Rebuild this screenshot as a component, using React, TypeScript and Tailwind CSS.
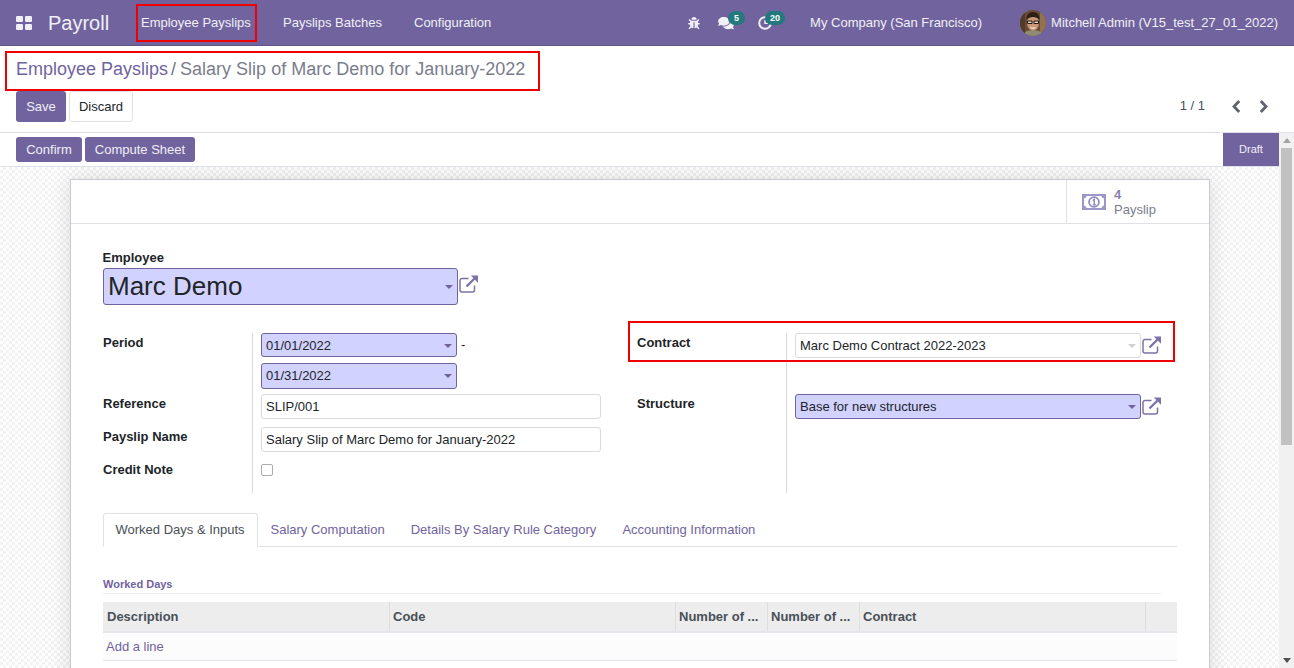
import { FaBug, FaComments } from "react-icons/fa";
import type { ReactNode } from "react";

// fa-external-link, the package only has the newer shapes
function OpenLink({ big }: { big?: boolean }) {
  return (
    <svg viewBox="0 0 20 20" className={big ? "w-[20px] h-[20px] ml-px mt-[6px] shrink-0" : "w-[20px] h-[20px] ml-px mt-[2px] shrink-0"} fill="none" stroke="#7d71a8">
      <path d="M15.500 11.500v4.500a2 2 0 0 1-2 2H3a2 2 0 0 1-2-2V6.500a2 2 0 0 1 2-2h6.500" strokeWidth="1.500" />
      <path d="M7.500 12.500 17 3" strokeWidth="2.300" />
      <path d="M11.800 1.500H19v7.200z" fill="#7d71a8" stroke="none" />
    </svg>
  );
}

function AppsIcon() {
  return (
    <svg viewBox="0 0 16 14" className="w-[16px] h-[14px]" fill="#f2f0f7">
      <rect x="0" y="0" width="7" height="6" rx="1.300" />
      <rect x="9" y="0" width="7" height="6" rx="1.300" />
      <rect x="0" y="8" width="7" height="6" rx="1.300" />
      <rect x="9" y="8" width="7" height="6" rx="1.300" />
    </svg>
  );
}

function ClockIcon() {
  return (
    <svg viewBox="0 0 14 14" className="w-[14px] h-[14px]" fill="none" stroke="#f2f0f7" strokeWidth="2">
      <circle cx="7" cy="7" r="5.800" />
      <path d="M7 4v3.400h3" strokeWidth="1.400" />
    </svg>
  );
}

function MoneyIcon() {
  return (
    <svg viewBox="0 0 24 16" className="w-[24px] h-[16px]">
      <path d="M0 0h24v16H0z" fill="#9b97c9" />
      <path d="M4.500 2h15q0 2 2.500 2.500v7q-2.500.5-2.500 2.500h-15q0-2-2.500-2.500v-7q2.500-.5 2.500-2.500z" fill="#fff" />
      <circle cx="12" cy="8" r="5.800" fill="#8f8bc0" />
      <circle cx="12" cy="8" r="4" fill="#fff" />
      <path d="M10.800 6.300 12.300 5.300V10.800M10.800 10.800h3" fill="none" stroke="#8f8bc0" strokeWidth="1.400" />
    </svg>
  );
}

function Avatar() {
  return (
    <svg viewBox="0 0 26 26" className="w-[26px] h-[26px] rounded-full shrink-0">
      <rect width="26" height="26" fill="#6b4c33" />
      <rect x="20" width="6" height="26" fill="#94714f" />
      <rect width="5" height="26" fill="#4f3b29" />
      <path d="M3 26q1-6 10-6t10 6z" fill="#8f8a76" />
      <ellipse cx="13" cy="12.500" rx="6" ry="8" fill="#c9977a" />
      <path d="M6.500 10q0-8 6.500-8t6.500 8q-2.500-3-6.500-3t-6.500 3z" fill="#2b2019" />
      <path d="M7.500 11h4.500v2.500H7.500zM14 11h4.500v2.500H14z" fill="#e8d5c4" stroke="#241a14" strokeWidth="1" />
      <path d="M10.500 17.500q2.500 1.200 5 0" stroke="#f7efe8" strokeWidth="1.200" fill="none" />
    </svg>
  );
}

function Chevron({ path, className }: { path: string; className: string }) {
  return (
    <svg viewBox="0 0 9 13" className={`w-[9px] h-[13px] ${className}`} fill="none" stroke="#5f636f" strokeWidth="2.800">
      <path d={path} />
    </svg>
  );
}

function Badge({ children, wide }: { children: ReactNode; wide?: boolean }) {
  return (
    <span className={`absolute -top-[5px] h-[14px] rounded-full bg-[#23797d] text-white text-[9px] leading-[14px] font-bold text-center ${wide ? "left-[7px] w-[20px]" : "left-[10px] w-[17px]"}`}>
      {children}
    </span>
  );
}

function Caret({ color }: { color: string }) {
  return <span className={`w-0 h-0 border-x-[4px] border-x-transparent border-t-[4px] ${color}`} />;
}

function FieldRow({ label, height, children }: { label: string; height: string; children: ReactNode }) {
  return (
    <div className={`flex ${height}`}>
      <div className="w-[149px] shrink-0 font-bold pt-[3px] leading-[14px]">{label}</div>
      <div className="flex-1 border-l border-[#d8dadd] pl-[8px]">{children}</div>
    </div>
  );
}

function RequiredSelect({ value, className }: { value: string; className: string }) {
  return (
    <div className={`flex items-center justify-between bg-[#d2d2ff] border border-[#71639e] rounded-[3px] pl-[4px] pr-[4px] ${className}`}>
      <span>{value}</span>
      <Caret color="border-t-[#71639e]" />
    </div>
  );
}

function TextInput({ value }: { value: string }) {
  return (
    <div className="flex items-center h-[25px] border border-[#d8dadd] rounded-[3px] px-[4px]">{value}</div>
  );
}

const columns = [
  { name: "Description", width: "w-[287px]" },
  { name: "Code", width: "w-[286px]" },
  { name: "Number of ...", width: "w-[92px]" },
  { name: "Number of ...", width: "w-[92px]" },
  { name: "Contract", width: "w-[286px]" },
  { name: "", width: "flex-1" },
];

export default function App() {
  return (
    <div className="h-[668px] overflow-hidden flex flex-col bg-white text-[13px] text-[#212529] font-['Liberation_Sans',Arial,sans-serif]">
      {/* Top navbar */}
      <nav className="h-[46px] shrink-0 flex items-center bg-[#71639e] border-b border-[#5f5387] text-white/90">
        <div className="ml-[16px]"><AppsIcon /></div>
        <span className="ml-[16px] text-[20px] w-[61px]">Payroll</span>
        <span className="ml-[27px] w-[121px] h-[38px] flex items-center pl-[3px] border-2 border-[#f00000]">Employee Payslips</span>
        <span className="ml-[26px]">Payslips Batches</span>
        <span className="ml-[32px]">Configuration</span>
        <div className="ml-auto flex items-center">
          <FaBug className="w-[12px] h-[12px] text-[#f2f0f7]" />
          <span className="relative ml-[18px]">
            <FaComments className="w-[16px] h-[14px] text-[#f2f0f7]" />
            <Badge>5</Badge>
          </span>
          <span className="relative ml-[24px]">
            <ClockIcon />
            <Badge wide>20</Badge>
          </span>
          <span className="ml-[38px]">My Company (San Francisco)</span>
          <span className="ml-[38px]"><Avatar /></span>
          <span className="ml-[5px] mr-[16px]">Mitchell Admin (V15_test_27_01_2022)</span>
        </div>
      </nav>

      {/* Control panel */}
      <div className="h-[87px] shrink-0 border-b border-[#dee2e6] pt-[5px]">
        <div className="ml-[5px] w-[535px] h-[40px] flex items-center pl-[9px] pb-[3px] border-2 border-[#f00000] text-[18px]">
          <span className="text-[#71639e]">Employee Payslips</span>
          <span className="ml-[3px] mr-[4px] text-[#6c757d]">/</span>
          <span className="text-[#7a7d8c]">Salary Slip of Marc Demo for January-2022</span>
        </div>
        <div className="flex items-center pl-[16px] pr-[26px]">
          <button className="h-[31px] w-[50px] rounded-[3px] bg-[#71639e] text-white/90">Save</button>
          <button className="h-[31px] w-[64px] ml-[3px] rounded-[3px] border border-[#dee2e6] bg-white">Discard</button>
          <span className="ml-auto pb-[2px] text-[#495057]">1 / 1</span>
          <Chevron path="M7.200 1 2 6.500 7.200 12" className="ml-[27px]" />
          <Chevron path="M1.800 1 7 6.500 1.800 12" className="ml-[18px]" />
        </div>
      </div>

      <div className="flex flex-1 min-h-0">
        <div className="flex-1 min-w-0 flex flex-col">
          {/* Statusbar */}
          <div className="h-[34px] shrink-0 flex items-center border-b border-[#dee2e6] pl-[16px]">
            <button className="h-[25px] w-[66px] rounded-[3px] bg-[#71639e] text-white/90">Confirm</button>
            <button className="h-[25px] w-[110px] ml-[3px] rounded-[3px] bg-[#71639e] text-white/90">Compute Sheet</button>
            <div className="ml-auto w-[56px] h-[33px] flex items-center justify-center self-start bg-[#71639e] text-white/90 text-[11px]">Draft</div>
          </div>

          {/* Form background */}
          <div className="flex-1 min-h-0 overflow-hidden bg-[conic-gradient(#f3f3f3_25%,#fff_0_50%,#f3f3f3_0_75%,#fff_0)] bg-[length:6px_6px] pt-[12px] px-[70px]">
            <div className="w-[1140px] min-h-[520px] bg-white border border-[#c9c9d1] shadow-[0_0_22px_rgba(0,0,0,0.14)]">
              <div className="h-[44px] flex justify-end border-b border-[#dee2e6]">
                <div className="w-[143px] flex items-center border-l border-[#dee2e6] pl-[15px]">
                  <MoneyIcon />
                  <div className="ml-[8px] leading-[15px]">
                    <div className="font-bold text-[#8a7fb0] mt-[1px]">4</div>
                    <div className="text-[#7a7d8c]">Payslip</div>
                  </div>
                </div>
              </div>

              <div className="px-[32px] pt-[26px]">
                <div className="font-bold leading-[15px] -ml-[0.5px]">Employee</div>
                <div className="flex mt-[3px]">
                  <RequiredSelect value="Marc Demo" className="w-[355px] h-[37px] text-[26px]" />
                  <OpenLink big />
                </div>

                <div className="flex mt-[28px]">
                  <div className="w-[498px]">
                    <FieldRow label="Period" height="h-[61px]">
                      <div className="flex items-center">
                        <RequiredSelect value="01/01/2022" className="w-[196px] h-[24px] pt-px" />
                        <span className="ml-[4px]">-</span>
                      </div>
                      <RequiredSelect value="01/31/2022" className="w-[196px] h-[26px] mt-[6px]" />
                    </FieldRow>
                    <FieldRow label="Reference" height="h-[33px]">
                      <TextInput value="SLIP/001" />
                    </FieldRow>
                    <FieldRow label="Payslip Name" height="h-[33px]">
                      <TextInput value="Salary Slip of Marc Demo for January-2022" />
                    </FieldRow>
                    <FieldRow label="Credit Note" height="h-[33px]">
                      <div className="w-[12px] h-[12px] mt-[4px] border border-[#a9acb3] rounded-[2px]" />
                    </FieldRow>
                  </div>

                  <div className="ml-[36px] w-[540px]">
                    <div className="relative">
                      <FieldRow label="Contract" height="h-[61px]">
                        <div className="flex">
                          <div className="w-[346px] h-[25px] flex items-center justify-between border border-[#d8dadd] rounded-[3px] pl-[4px] pr-[4px]">
                            <span>Marc Demo Contract 2022-2023</span>
                            <Caret color="border-t-[#d0d0d4]" />
                          </div>
                          <OpenLink />
                        </div>
                      </FieldRow>
                      <div className="absolute left-[-9px] top-[-12px] w-[547px] h-[41px] border-2 border-[#f00000]" />
                    </div>
                    <FieldRow label="Structure" height="h-[99px]">
                      <div className="flex">
                        <RequiredSelect value="Base for new structures" className="w-[346px] h-[25px]" />
                        <OpenLink />
                      </div>
                    </FieldRow>
                  </div>
                </div>

                {/* Tabs */}
                <div className="flex h-[34px] mt-[20px] border-b border-[#dee2e6] text-[#71639e]">
                  <div className="w-[155px] h-[34px] flex items-center pl-[11.500px] border border-[#dee2e6] border-b-white rounded-t-[3px] bg-white text-[#495057]">Worked Days &amp; Inputs</div>
                  <div className="ml-[12.500px] flex items-center">Salary Computation</div>
                  <div className="ml-[26px] flex items-center">Details By Salary Rule Category</div>
                  <div className="ml-[26px] flex items-center">Accounting Information</div>
                </div>

                <div className="mt-[31px] mr-[16px] h-[16px] border-b border-[#eeeeee] text-[11px] font-bold text-[#71639e] leading-[13px]">Worked Days</div>

                {/* Worked days table */}
                <div className="mt-[8px] h-[31px] flex items-center bg-[#ededed] border-b-2 border-[#e4e7ec] font-bold text-[#495057]">
                  {columns.map((col, i) => (
                    <div key={i} className={`${col.width} h-full flex items-center pl-[3px] first:pl-[4px] border-r border-[#dedede] last:border-r-0`}>{col.name}</div>
                  ))}
                </div>
                <div className="h-[28px] flex items-center pl-[3px] bg-[#fcfcfc] border-b border-[#e4e4ea] text-[#71639e]">Add a line</div>
              </div>
            </div>
          </div>
        </div>

        {/* Scrollbar */}
        <div className="w-[15px] shrink-0 flex flex-col items-center bg-[#f1f1f1]">
          <div className="h-[15px] flex items-center"><div className="w-0 h-0 border-x-[4px] border-x-transparent border-b-[5px] border-b-[#a3a3a3]" /></div>
          <div className="w-[11px] h-[297px] bg-[#c1c1c1]" />
          <div className="mt-auto h-[15px] flex items-center"><div className="w-0 h-0 border-x-[4px] border-x-transparent border-t-[5px] border-t-[#505050]" /></div>
        </div>
      </div>
    </div>
  );
}
